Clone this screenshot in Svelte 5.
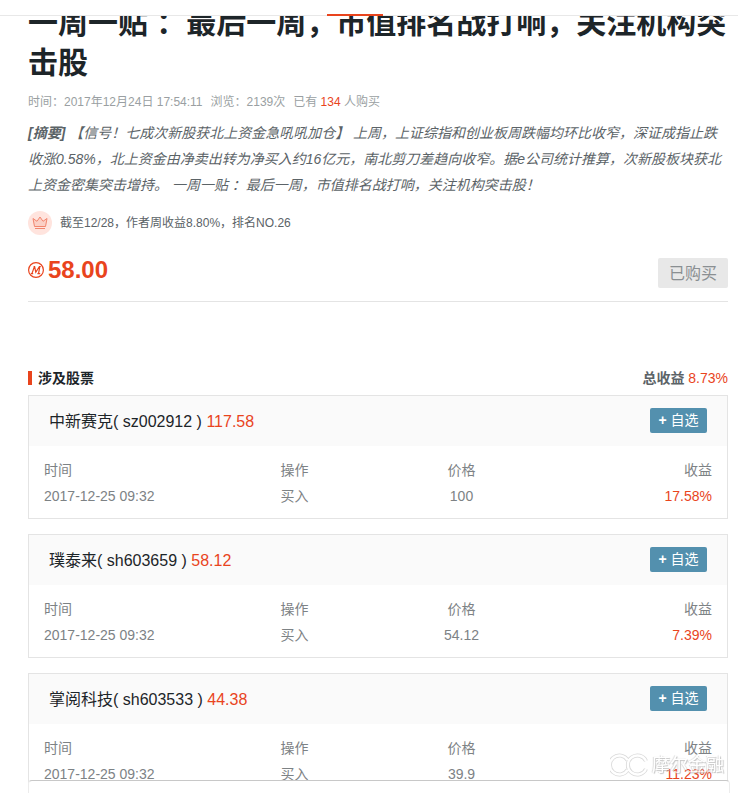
<script lang="ts">
	type Trade = { time: string; action: string; price: string; profit: string };
	type Stock = { name: string; code: string; current: string; trades: Trade[] };

	const stocks: Stock[] = [
		{
			name: "中新赛克",
			code: "sz002912",
			current: "117.58",
			trades: [{ time: "2017-12-25 09:32", action: "买入", price: "100", profit: "17.58%" }],
		},
		{
			name: "璞泰来",
			code: "sh603659",
			current: "58.12",
			trades: [{ time: "2017-12-25 09:32", action: "买入", price: "54.12", profit: "7.39%" }],
		},
		{
			name: "掌阅科技",
			code: "sh603533",
			current: "44.38",
			trades: [{ time: "2017-12-25 09:32", action: "买入", price: "39.9", profit: "11.23%" }],
		},
	];

	// open rings of the brand mark, drawn once as outline and once as fill
	const rings = "M17.6 7.2A9.5 9.5 0 1 0 17.6 16.8M36 16A9.5 9.5 0 1 1 36 8";
</script>

<div class="page">
	<header class="topbar">
		<div class="tab-line"></div>
	</header>

	<main class="article">
		<h1 class="title">一周一贴 ：最后一周，市值排名战打响，关注机构突击股</h1>

		<p class="meta">
			<span>时间：2017年12月24日 17:54:11</span>
			<span>浏览：2139次</span>
			<span>已有 <em class="red">134</em> 人购买</span>
		</p>

		<p class="summary">
			<b>[摘要]</b> 【信号！七成次新股获北上资金急吼吼加仓】 上周，上证综指和创业板周跌幅均环比收窄，深证成指止跌收涨0.58%，北上资金由净卖出转为净买入约16亿元，南北剪刀差趋向收窄。据e公司统计推算，次新股板块获北上资金密集突击增持。 一周一贴 ：最后一周，市值排名战打响，关注机构突击股！
		</p>

		<div class="rank">
			<svg width="24" height="24" viewBox="0 0 24 24" aria-hidden="true">
				<circle cx="12" cy="12" r="12" fill="#ffe4de" />
				<path
					d="M6.5 15.5 5 7.5l4 2.8L12 6l3 4.3 4-2.8-1.5 8z"
					fill="#fbd0c6"
					stroke="#f2866f"
					stroke-linejoin="round"
				/>
				<path d="M7 17.5h10" stroke="#f2866f" />
			</svg>
			<span>截至12/28，作者周收益8.80%，排名NO.26</span>
		</div>

		<div class="buy">
			<div class="price">
				<svg width="16" height="16" viewBox="0 0 16 16" aria-hidden="true">
					<circle cx="8" cy="8" r="7.4" fill="none" stroke="#e9441d" stroke-width="1.2" />
					<path
						d="M2.8 11.6h2.4M4 11.4 6.4 4.6M5.6 4.5h1l1.2 5.7 3.6-5.7h1.4M11.8 4.7l-1.2 6.7M9.4 11.6h2.8"
						fill="none"
						stroke="#e9441d"
						stroke-width="1.2"
					/>
				</svg>
				<strong>58.00</strong>
			</div>
			<button class="bought" type="button">已购买</button>
		</div>

		<section class="stocks">
			<div class="stocks-head">
				<h2>涉及股票</h2>
				<p><b>总收益</b> <span class="red">8.73%</span></p>
			</div>

			{#each stocks as stock (stock.code)}
				<article class="card">
					<div class="card-head">
						<h3>{stock.name}( {stock.code} ) <span class="red">{stock.current}</span></h3>
						<button class="add" type="button"><b>+</b> 自选</button>
					</div>
					<div class="card-body">
						<table>
							<thead>
								<tr><th>时间</th><th>操作</th><th>价格</th><th>收益</th></tr>
							</thead>
							<tbody>
								{#each stock.trades as trade}
									<tr>
										<td>{trade.time}</td>
										<td>{trade.action}</td>
										<td>{trade.price}</td>
										<td class="red">{trade.profit}</td>
									</tr>
								{/each}
							</tbody>
						</table>
					</div>
				</article>
			{/each}
		</section>
	</main>

	<div class="bottom-panel"></div>

	<div class="watermark">
		<svg width="38" height="24" viewBox="0 0 38 24" fill="none" aria-hidden="true">
			<path d={rings} stroke="#c8c8c8" stroke-width="4" />
			<path d={rings} stroke="#fff" stroke-width="2.4" />
		</svg>
		<span>摩尔金融</span>
	</div>
</div>

<style>
	:global(body) {
		margin: 0;
		background: #fff;
	}

	.page {
		height: 100vh;
		overflow: hidden;
		font-family: "Liberation Sans", Arial, "Noto Sans CJK SC", sans-serif;
		font-size: 14px;
		color: #5b6367;
	}

	h1,
	h2,
	h3,
	p {
		margin: 0;
	}

	button {
		border: 0;
		border-radius: 2px;
		padding: 0 0 2px;
		font-family: inherit;
		cursor: pointer;
	}

	.red {
		color: #e9441d;
		font-style: normal;
	}

	/* top bar */
	.topbar {
		position: fixed;
		top: 0;
		left: 0;
		right: 0;
		z-index: 10;
		height: 15px;
		background: #fff;
		border-bottom: 1px solid #e8e8e8;
	}

	.tab-line {
		position: absolute;
		bottom: -1px;
		left: 327px;
		width: 56px;
		height: 2px;
		background: #e9441d;
	}

	/* article */
	.article {
		padding: 3px 10px 0 28px;
	}

	.title {
		font-size: 30px;
		line-height: 40px;
		color: #1d2529;
	}

	.meta {
		display: flex;
		gap: 8px;
		margin-top: 10px;
		font-size: 12px;
		line-height: 18px;
		color: #9a9fa2;
	}

	.summary {
		margin-top: 9px;
		line-height: 26px;
		font-style: italic;
	}

	.rank {
		display: flex;
		align-items: center;
		gap: 8px;
		margin-top: 13px;
		font-size: 12px;
		line-height: 24px;
	}

	.buy {
		display: flex;
		justify-content: space-between;
		align-items: flex-end;
		margin-top: 19px;
		padding-bottom: 13px;
		border-bottom: 1px solid #e4e4e4;
	}

	.price {
		display: flex;
		align-items: center;
		gap: 4px;
		height: 34px;
		align-self: flex-start;
		padding-bottom: 2px;
		box-sizing: border-box;
		font-size: 24px;
		line-height: 32px;
		color: #e9441d;
	}

	.bought {
		width: 70px;
		height: 30px;
		background: #e8e8e8;
		color: #8a8f92;
		font-size: 16px;
	}

	/* stocks */
	.stocks {
		margin-top: 64px;
	}

	.stocks-head {
		display: flex;
		justify-content: space-between;
		align-items: center;
		margin-bottom: 5px;
		line-height: 24px;
	}

	.stocks-head h2 {
		display: flex;
		align-items: center;
		gap: 6px;
		font-size: 14px;
		color: #1d2529;
	}

	.stocks-head h2::before {
		content: "";
		width: 4px;
		height: 14px;
		background: #e9441d;
	}

	.card {
		margin-bottom: 15px;
		border: 1px solid #e4e4e4;
	}

	.card-head {
		display: flex;
		justify-content: space-between;
		align-items: center;
		height: 48px;
		padding: 0 20px 2px;
		background: #fafafa;
	}

	.card-head h3 {
		font-size: 16px;
		font-weight: normal;
		color: #1d2529;
	}

	.add {
		width: 57px;
		height: 25px;
		background: #5390ae;
		color: #fff;
		font-size: 14px;
	}

	.card-body {
		padding: 11px 15px 9px;
	}

	table {
		width: 100%;
		table-layout: fixed;
		border-collapse: collapse;
		color: #7d8285;
	}

	th,
	td {
		padding: 0;
		font-weight: normal;
		line-height: 26px;
		text-align: center;
	}

	th:first-child,
	td:first-child {
		text-align: left;
	}

	th:last-child,
	td:last-child {
		text-align: right;
	}

	td.red {
		color: #e9441d;
	}

	/* overlays */
	.bottom-panel {
		position: fixed;
		left: 28px;
		right: 8px;
		bottom: 0;
		height: 12px;
		background: #fff;
		border: 1px solid #ececec;
		border-top-color: #c8c8c8;
		border-bottom: 0;
		border-radius: 4px 4px 0 0;
	}

	.watermark {
		position: fixed;
		right: 14px;
		bottom: 14px;
		display: flex;
		align-items: center;
		gap: 4px;
		opacity: 0.7;
		font-size: 18px;
		line-height: 28px;
		color: #fff;
		text-shadow:
			1px 1px 1px #aaa,
			-1px 0 1px #ccc;
	}
</style>
